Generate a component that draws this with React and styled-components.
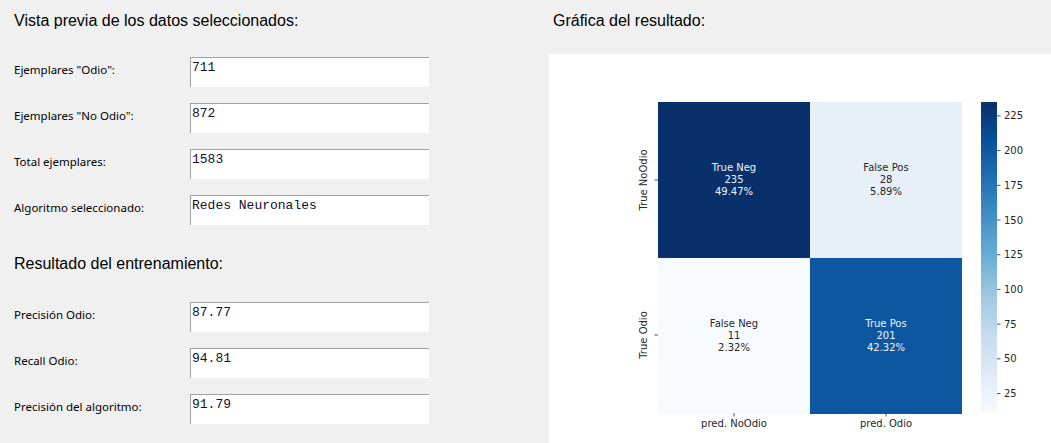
import React from 'react';
import styled, { createGlobalStyle } from 'styled-components';

const GlobalStyle = createGlobalStyle`
  html, body {
    margin: 0;
    padding: 0;
    background: #f0f0f0;
  }
`;

const Window = styled.div`
  display: flex;
  width: 1051px;
  height: 443px;
  background: #f0f0f0;
  overflow: hidden;
`;

const LeftPanel = styled.section`
  width: 549px;
  padding-left: 14px;
  box-sizing: border-box;
  display: flex;
  flex-direction: column;
`;

const Heading = styled.h2`
  margin: 0;
  font-family: "Liberation Sans", Arial, sans-serif;
  font-weight: normal;
  font-size: 16px;
  line-height: 19px;
  color: #000;
  padding-top: ${(p) => p.top}px;
  padding-bottom: ${(p) => p.bottom}px;
`;

const Fields = styled.div`
  display: flex;
  flex-direction: column;
  gap: 16px;
`;

const Row = styled.div`
  display: flex;
  align-items: flex-start;
`;

const Label = styled.span`
  width: 176px;
  padding-top: 5px;
  font-family: "Noto Sans", "Open Sans", sans-serif;
  font-size: 11.5px;
  line-height: 16px;
  color: #000;
`;

const Box = styled.div`
  width: 239px;
  height: 30px;
  box-sizing: border-box;
  background: #fff;
  border-top: 1px solid #a0a0a0;
  border-left: 1px solid #a0a0a0;
  padding: 2px 0 0 1px;
  font-family: "Liberation Mono", "Courier New", monospace;
  font-size: 13px;
  line-height: 15px;
  color: #101030;
  white-space: pre;
`;

const RightPanel = styled.section`
  flex: 1;
  display: flex;
  flex-direction: column;
`;

const RightHeading = styled(Heading)`
  padding-left: 4px;
`;

const Canvas = styled.div`
  flex: 1;
  background: #fff;
`;

const Chart = styled.svg`
  display: block;
  font-family: "DejaVu Sans", sans-serif;
`;

const preview = [
  ['Ejemplares "Odio":', '711'],
  ['Ejemplares "No Odio":', '872'],
  ['Total ejemplares:', '1583'],
  ['Algoritmo seleccionado:', 'Redes Neuronales'],
];

const results = [
  ['Precisión Odio:', '87.77'],
  ['Recall Odio:', '94.81'],
  ['Precisión del algoritmo:', '91.79'],
];

const cells = [
  { x: 109, y: 48, fill: '#08306b', text: '#f0f4fa', lines: ['True Neg', '235', '49.47%'] },
  { x: 261, y: 48, fill: '#e7eff9', text: '#262626', lines: ['False Pos', '28', '5.89%'] },
  { x: 109, y: 204, fill: '#f7fbff', text: '#262626', lines: ['False Neg', '11', '2.32%'] },
  { x: 261, y: 204, fill: '#0d57a1', text: '#f0f4fa', lines: ['True Pos', '201', '42.32%'] },
];

const blues = ['#f7fbff', '#deebf7', '#c6dbef', '#9ecae1', '#6baed6', '#4292c6', '#2171b5', '#08519c', '#08306b'];
const barTop = 48;
const barBottom = 359;
const vmin = 11;
const vmax = 235;
const tickY = (v) => barBottom - ((v - vmin) / (vmax - vmin)) * (barBottom - barTop);

const Field = ({ label, value }) => (
  <Row>
    <Label>{label}</Label>
    <Box>{value}</Box>
  </Row>
);

const ConfusionMatrix = () => (
  <Chart width="502" height="389" viewBox="0 0 502 389">
    <defs>
      <linearGradient id="blues" x1="0" y1="1" x2="0" y2="0">
        {blues.map((c, i) => (
          <stop key={c} offset={i / (blues.length - 1)} stopColor={c} />
        ))}
      </linearGradient>
    </defs>
    {cells.map((c) => (
      <g key={c.lines[0]}>
        <rect x={c.x} y={c.y} width="152" height="156" fill={c.fill} />
        {c.lines.map((t, i) => (
          <text
            key={t}
            x={c.x + 76}
            y={c.y + 65 + i * 12}
            fontSize="10"
            fill={c.text}
            textAnchor="middle"
            dominantBaseline="central"
          >
            {t}
          </text>
        ))}
      </g>
    ))}

    {[['True NoOdio', 126], ['True Odio', 281]].map(([t, y]) => (
      <g key={t}>
        <line x1="105.5" x2="109" y1={y} y2={y} stroke="#262626" strokeWidth="0.8" />
        <text
          x="94"
          y={y}
          fontSize="10"
          fill="#262626"
          textAnchor="middle"
          dominantBaseline="central"
          transform={`rotate(-90 94 ${y})`}
        >
          {t}
        </text>
      </g>
    ))}

    {[['pred. NoOdio', 185], ['pred. Odio', 337]].map(([t, x]) => (
      <g key={t}>
        <line x1={x} x2={x} y1="359" y2="362.5" stroke="#262626" strokeWidth="0.8" />
        <text x={x} y="369" fontSize="10" fill="#262626" textAnchor="middle" dominantBaseline="central">
          {t}
        </text>
      </g>
    ))}

    <rect x="432" y={barTop} width="16" height={barBottom - barTop} fill="url(#blues)" />
    {[25, 50, 75, 100, 125, 150, 175, 200, 225].map((v) => (
      <g key={v}>
        <line x1="448" x2="451.5" y1={tickY(v)} y2={tickY(v)} stroke="#262626" strokeWidth="0.8" />
        <text x="455" y={tickY(v)} fontSize="10" fill="#262626" dominantBaseline="central">
          {v}
        </text>
      </g>
    ))}
  </Chart>
);

const App = () => (
  <Window>
    <GlobalStyle />
    <LeftPanel>
      <Heading top={11} bottom={27}>Vista previa de los datos seleccionados:</Heading>
      <Fields>
        {preview.map(([l, v]) => (
          <Field key={l} label={l} value={v} />
        ))}
      </Fields>
      <Heading top={29} bottom={29}>Resultado del entrenamiento:</Heading>
      <Fields>
        {results.map(([l, v]) => (
          <Field key={l} label={l} value={v} />
        ))}
      </Fields>
    </LeftPanel>
    <RightPanel>
      <RightHeading top={11} bottom={24}>Gráfica del resultado:</RightHeading>
      <Canvas>
        <ConfusionMatrix />
      </Canvas>
    </RightPanel>
  </Window>
);

export default App;
